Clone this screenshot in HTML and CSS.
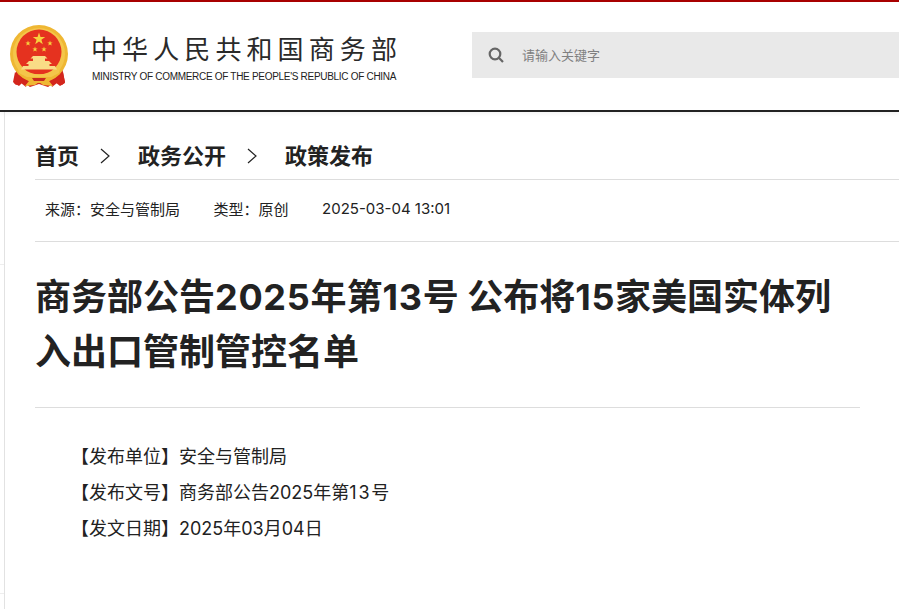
FILE: index.html
```html
<!DOCTYPE html>
<html lang="zh-CN">
<head>
    <meta charset="UTF-8">
    <title>商务部公告2025年第13号</title>
    <link rel="stylesheet" href="styles.css">
</head>
<body>
    <header class="site-head">
        <div class="logo">
            <svg class="emblem" viewBox="0 0 60 64" width="60" height="64">
                <!-- ribbons -->
                <path d="M7 42 L4 58 L9 61 L13 57 L20 62 L29 59 L38 62 L45 57 L50 61 L55 58 L52 42 Z" fill="#d3261d"/>
                <!-- ring -->
                <circle cx="29" cy="29" r="29" fill="#efb733"/>
                <circle cx="29" cy="29" r="26" fill="#f4c64a"/>
                <circle cx="29" cy="27" r="22.500" fill="#e5321f"/>
                <!-- stars -->
                <path d="M29 7.500l1.500 4.400h4.700l-3.800 2.800 1.400 4.500-3.800-2.800-3.800 2.800 1.400-4.500-3.800-2.800h4.700z" fill="#f7d23e"/>
                <path d="M18 15.500l.7 1.900h2l-1.600 1.200.6 2-1.700-1.200-1.700 1.200.6-2-1.600-1.200h2z" fill="#f7d23e"/>
                <path d="M40 15.500l.7 1.900h2l-1.600 1.200.6 2-1.700-1.200-1.700 1.200.6-2-1.600-1.200h2z" fill="#f7d23e"/>
                <path d="M25 21.500l.7 1.900h2l-1.600 1.200.6 2-1.700-1.200-1.700 1.200.6-2-1.600-1.200h2z" fill="#f7d23e"/>
                <path d="M34 21.500l.7 1.900h2l-1.600 1.200.6 2-1.700-1.200-1.700 1.200.6-2-1.600-1.200h2z" fill="#f7d23e"/>
                <!-- gate -->
                <path d="M23 31h12l2.500 2.500H35V36h4l3 3h-2.500v2H45l2 3.500H11l2-3.500h5.500v-2H16l3-3h4v-2.500h-2.500z" fill="#f9dc86"/>
                <path d="M8 44 C18 51 40 51 50 44 L49 48 C40 54 18 54 9 48 Z" fill="#f4c64a"/>
                <!-- lower ribbons and knot -->
                <path d="M5 47 C10 52 14 55 18 56 L16 62 L11 58 L6 60 L3 57 Z" fill="#d3261d"/>
                <path d="M53 47 C48 52 44 55 40 56 L42 62 L47 58 L52 60 L55 57 Z" fill="#d3261d"/>
                <path d="M16 52 L42 52 L39 56 L43 61 L33 60 L29 57 L25 60 L15 61 L19 56 Z" fill="#efb733"/>
                <path d="M22 53h14l-2 3H24z" fill="#c9291e"/>
            </svg>
            <div class="logo-text">
                <div class="logo-cn">中华人民共和国商务部</div>
                <div class="logo-en">MINISTRY OF COMMERCE OF THE PEOPLE'S REPUBLIC OF CHINA</div>
            </div>
        </div>
        <div class="search">
            <svg class="search-icon" viewBox="0 0 16 16" width="16" height="16">
                <circle cx="7" cy="7" r="5.300" fill="none" stroke="#666" stroke-width="2.200"/>
                <path d="M10.800 10.800 L15 15" stroke="#666" stroke-width="2.200"/>
            </svg>
            <span class="search-hint">请输入关键字</span>
        </div>
    </header>

    <div class="page">
        <div class="side"></div>
        <main class="content">
            <div class="crumbs">
                <span>首页</span>
                <svg class="crumb-arrow" viewBox="0 0 10 16" width="10" height="16"><path d="M1 1 L9 8 L1 15" fill="none" stroke="#222" stroke-width="1.200"/></svg>
                <span>政务公开</span>
                <svg class="crumb-arrow" viewBox="0 0 10 16" width="10" height="16"><path d="M1 1 L9 8 L1 15" fill="none" stroke="#222" stroke-width="1.200"/></svg>
                <span>政策发布</span>
            </div>
            <div class="meta">
                <span>来源：安全与管制局</span>
                <span>类型：原创</span>
                <span>2025-03-04 13:01</span>
            </div>
            <div class="article">
                <h1>商务部公告<span class="num">2025</span>年第<span class="num">13</span>号 公布将<span class="num">15</span>家美国实体列入出口管制管控名单</h1>
                <div class="info">
                    <p>【发布单位】安全与管制局</p>
                    <p>【发布文号】商务部公告2025年第<span class="num">13</span>号</p>
                    <p>【发文日期】2025年03月04日</p>
                </div>
            </div>
        </main>
    </div>
</body>
</html>
```

FILE: styles.css
```css
body {
    margin: 0;
    height: 609px;
    overflow: hidden;
    background-color: #FFF;
    color: #222;
    font-family: Inter, "Noto Sans CJK SC", sans-serif;
}
.site-head {
    display: flex;
    align-items: flex-start;
    height: 108px;
    border-top: 2px solid #a80000;
    border-bottom: 2px solid #222;
    box-shadow: 0 2px 4px rgba(0, 0, 0, 0.05);
}
.logo {
    display: flex;
    width: 472px;
    padding: 23px 0 0 10px;
    box-sizing: border-box;
}
.emblem {
    flex: none;
}
.logo-text {
    margin-left: 21px;
}
.logo-cn {
    margin-top: 6px;
    font-family: "Noto Sans CJK SC", sans-serif;
    font-size: 26px;
    font-weight: 400;
    line-height: 34px;
    letter-spacing: 5.100px;
    white-space: nowrap;
    color: #2a2a2a;
}
.logo-en {
    margin-top: 5px;
    margin-left: 1px;
    font-family: "Liberation Sans", sans-serif;
    font-size: 10px;
    letter-spacing: -0.300px;
    line-height: 14px;
    white-space: nowrap;
    color: #222;
}
.search {
    display: flex;
    align-items: center;
    flex: 1;
    height: 46px;
    margin-top: 30px;
    padding-left: 16px;
    background-color: #e9e9e9;
}
.search-hint {
    margin: 0 0 2px 18px;
    font-size: 13px;
    color: #808080;
}
.page {
    display: flex;
}
.side {
    width: 4px;
    height: 328px;
    margin-top: 152px;
    border-top: 1px solid #eee;
    border-bottom: 1px solid #eee;
}
.content {
    flex: 1;
    padding-left: 30px;
    height: 497px;
    border-left: 1px solid #e2e2e2;
}
.crumbs {
    display: flex;
    align-items: center;
    height: 67px;
    border-bottom: 1px solid #ddd;
    font-size: 22px;
    font-weight: 700;
}
.crumbs span {
    margin-top: 16px;
}
.crumb-arrow {
    margin: 20px 28px 0 21px;
}
.meta {
    display: flex;
    gap: 33.500px;
    height: 62px;
    padding: 0 0 4px 10px;
    box-sizing: border-box;
    align-items: center;
    border-bottom: 1px solid #ddd;
    font-size: 15px;
}
.article {
    width: 825px;
}
h1 {
    margin: 0;
    padding: 28px 0 27px;
    border-bottom: 1px solid #ddd;
    font-size: 36px;
    line-height: 55px;
    font-weight: 700;
}
h1 .num {
    letter-spacing: 0.700px;
}
.info {
    padding: 31px 0 0 36px;
    font-size: 18px;
}
.info p {
    margin: 0;
    line-height: 36px;
}
.info .num {
    letter-spacing: 1.800px;
}
```
